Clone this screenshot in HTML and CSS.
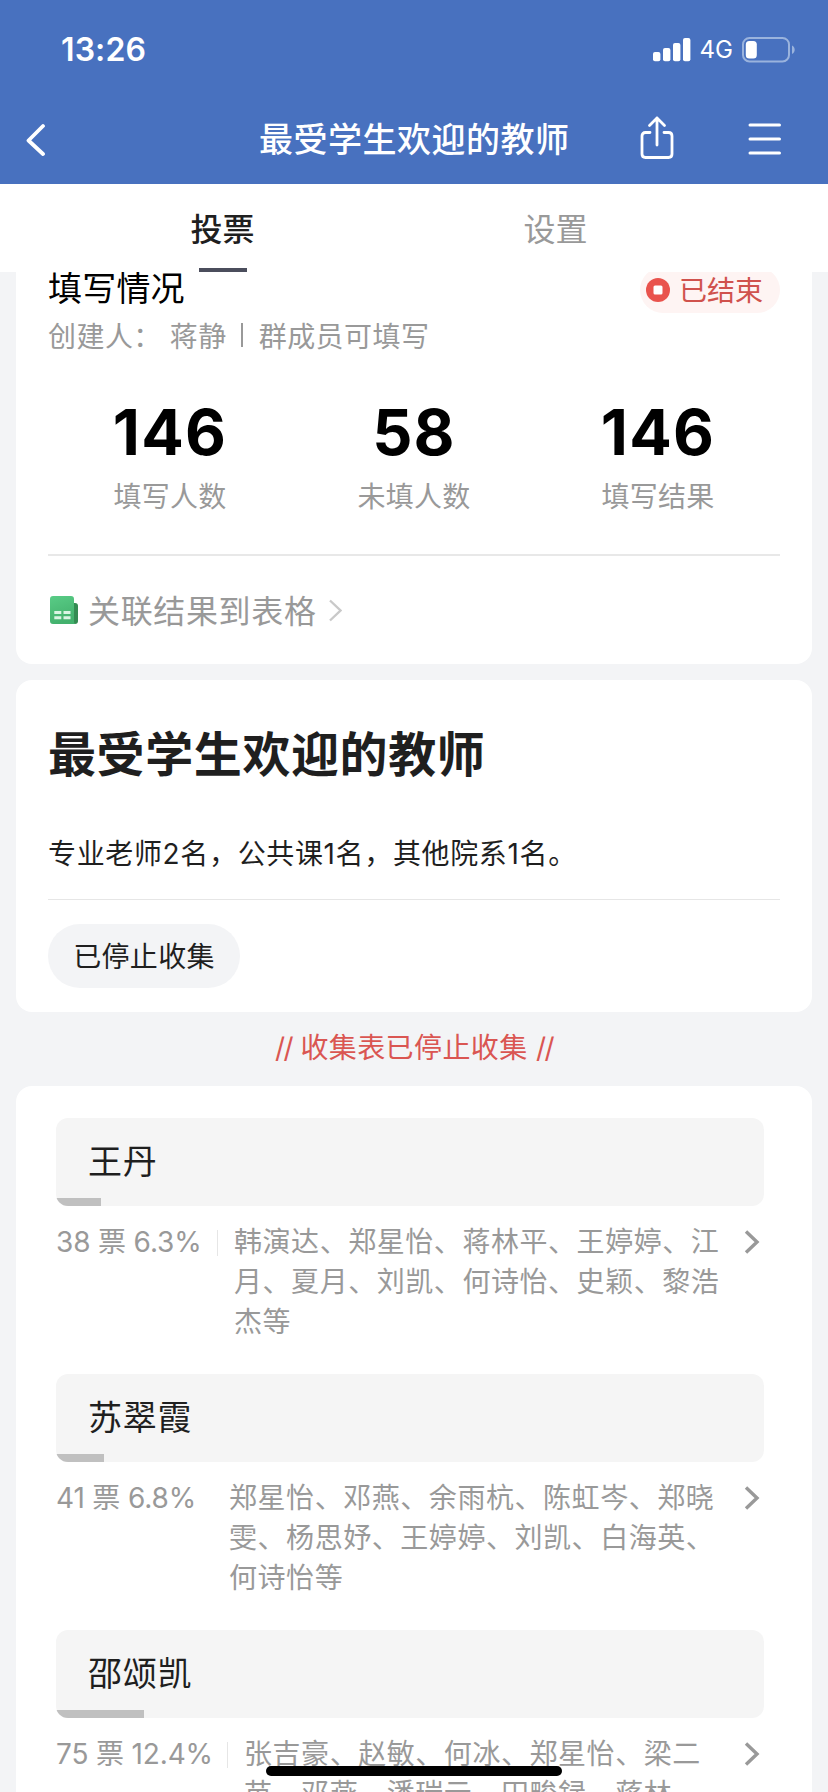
FILE: index.html
```html
<!DOCTYPE html>
<html lang="zh-CN">
<head>
<meta charset="utf-8">
<title>最受学生欢迎的教师</title>
<link rel="stylesheet" href="styles.css">
</head>
<body>
<div class="screen">
  <header class="header">
    <div class="status">
      <span class="time">13:26</span>
      <div class="status-right">
        <svg class="signal" width="38" height="24" viewBox="0 0 38 24" fill="#fff"><rect x="0" y="14" width="7.4" height="9.3" rx="2"/><rect x="10" y="10" width="7.4" height="13.3" rx="2"/><rect x="20" y="5" width="7.4" height="18.3" rx="2"/><rect x="30" y="0" width="7.4" height="23.3" rx="2"/></svg>
        <span class="net">4G</span>
        <svg width="54" height="26" viewBox="0 0 54 26"><rect x="1" y="1" width="46" height="23.4" rx="6.5" fill="none" stroke="#9ab3dd" stroke-width="2"/><rect x="3.8" y="4" width="11" height="17.4" rx="3.5" fill="#fff"/><path d="M50 8.5c3.6 1.3 3.6 7.100 0 8.400z" fill="#9ab3dd"/></svg>
      </div>
    </div>
    <div class="nav">
      <svg class="back" width="20" height="34" viewBox="0 0 20 34" fill="none" stroke="#fff" stroke-width="3.800" stroke-linecap="round" stroke-linejoin="round"><path d="M17 3L2.500 17.500L17 31"/></svg>
      <h1 class="nav-title">最受学生欢迎的教师</h1>
      <svg class="share" width="34" height="44" viewBox="0 0 34 44" fill="none" stroke="#fff" stroke-width="2.800" stroke-linecap="round" stroke-linejoin="round"><path d="M10 16.500H5.500Q2 16.500 2 20V38Q2 41.500 5.500 41.500H28.500Q32 41.500 32 38V20Q32 16.500 28.500 16.500H24M17 29V2M9.500 9.500L17 2L24.500 9.500"/></svg>
      <svg class="menu" width="34" height="34" viewBox="0 0 34 34" stroke="#fff" stroke-width="3" stroke-linecap="round"><path d="M2 3H31.500M2 17H31.500M2 31H31.500"/></svg>
    </div>
  </header>
  <nav class="tabs">
    <div class="tab active">投票</div>
    <div class="tab">设置</div>
  </nav>
  <main class="content">
    <section class="card summary">
      <div class="summary-head">
        <h2 class="summary-title">填写情况</h2>
        <span class="badge"><svg width="24" height="24" viewBox="0 0 24 24"><circle cx="12" cy="12" r="12" fill="#e9534d"/><rect x="7.500" y="7.500" width="9" height="9" rx="1.500" fill="#fff"/></svg><span class="badge-text">已结束</span></span>
      </div>
      <div class="creator"><span>创建人：</span><span class="who">蒋静</span><i class="sep"></i><span>群成员可填写</span></div>
      <div class="stats">
        <div class="stat"><b>146</b><span>填写人数</span></div>
        <div class="stat"><b>58</b><span>未填人数</span></div>
        <div class="stat"><b>146</b><span>填写结果</span></div>
      </div>
      <div class="link">
        <svg width="28" height="28" viewBox="0 0 28 28"><defs><linearGradient id="sheet" x1="0" y1="0" x2="0.300" y2="1"><stop offset="0" stop-color="#59cc86"/><stop offset="1" stop-color="#43b16d"/></linearGradient></defs><path d="M20 7h5q3 0 3 3v15q0 3-3 3h-5z" fill="#348b52"/><path d="M3 0H21q3 0 3 3V26q0 1.500 1.500 2H3q-3 0-3-3V3q0-3 3-3z" fill="url(#sheet)"/><path d="M4.300 15h7v3h-7zM13.500 15h7v3h-7zM4.300 20.300h7v3h-7zM13.500 20.300h7v3h-7z" fill="#d9f5e4"/></svg>
        <span class="link-text">关联结果到表格</span>
        <svg class="link-arrow" width="13" height="23" viewBox="0 0 13 23" fill="none" stroke="#c9c9c9" stroke-width="2.400"><path d="M1 1.500L11.500 11.500L1 21.500"/></svg>
      </div>
    </section>
    <section class="card form">
      <h2 class="form-title">最受学生欢迎的教师</h2>
      <p class="form-desc">专业老师2名，公共课1名，其他院系1名。</p>
      <div class="form-action"><button class="stopped">已停止收集</button></div>
    </section>
    <p class="notice"><span class="slash">//</span> 收集表已停止收集 <span class="slash">//</span></p>
    <section class="card votes">
      <article class="item">
        <div class="option">王丹<i class="bar" style="width:6.3%"></i></div>
        <div class="result"><span class="count w1">38 票 6.3%</span><p class="names">韩演达、郑星怡、蒋林平、王婷婷、江<br>月、夏月、刘凯、何诗怡、史颖、黎浩<br>杰等</p><svg class="more" width="16" height="24" viewBox="0 0 16 24"><path d="M2 1.500L13 12L2 22.500"/></svg></div>
      </article>
      <article class="item">
        <div class="option">苏翠霞<i class="bar" style="width:6.8%"></i></div>
        <div class="result"><span class="count w2">41 票 6.8%</span><p class="names">郑星怡、邓燕、余雨杭、陈虹岑、郑晓<br>雯、杨思妤、王婷婷、刘凯、白海英、<br>何诗怡等</p><svg class="more" width="16" height="24" viewBox="0 0 16 24"><path d="M2 1.500L13 12L2 22.500"/></svg></div>
      </article>
      <article class="item">
        <div class="option">邵颂凯<i class="bar" style="width:12.4%"></i></div>
        <div class="result"><span class="count w3">75 票 12.4%</span><p class="names">张吉豪、赵敏、何冰、郑星怡、梁二<br>苗、邓燕、潘瑞云、田畯録、蒋林</p><svg class="more" width="16" height="24" viewBox="0 0 16 24"><path d="M2 1.500L13 12L2 22.500"/></svg></div>
      </article>
    </section>
  </main>
  <div class="home"></div>
</div>
</body>
</html>
```
FILE: styles.css
```css
* { box-sizing: border-box; margin: 0; padding: 0; }
body { background: #f3f4f6; font-family: Inter, "Noto Sans CJK SC", sans-serif; color: #1f1f1f; }
svg { display: block; flex: none; }
i { font-style: normal; }
.screen { position: relative; width: 828px; height: 1792px; overflow: hidden; display: flex; flex-direction: column; white-space: nowrap; }

.header { height: 184px; flex: none; background: #4871bf; color: #fff; }
.status { height: 98px; padding: 1px 32px 0 61px; display: flex; align-items: center; justify-content: space-between; }
.time { font-size: 32px; font-weight: 600; letter-spacing: .1px; }
.status-right { display: flex; align-items: center; }
.net { margin: 0 9px 0 9px; font-size: 24px; }
.nav { height: 84px; padding: 0 46px 0 26px; display: flex; align-items: center; }
.nav-title { margin-left: 213px; font-size: 34px; line-height: 50px; font-weight: 500; letter-spacing: .5px; }
.share { margin-left: auto; margin-bottom: 4px; }
.menu { margin-left: 74px; margin-bottom: 2px; }

.tabs { height: 88px; flex: none; padding: 0 106px 0 56px; display: flex; background: #fff; position: relative; z-index: 1; }
.tab { flex: 1; display: flex; justify-content: center; align-items: center; padding-bottom: 3px; font-size: 32px; color: #999; position: relative; }
.tab.active { color: #1f1f1f; font-weight: 500; }
.tab.active::after { content: ""; position: absolute; bottom: 0; left: 50%; width: 48px; height: 4px; margin-left: -24px; background: #4b4d5c; }

.content { flex: 1; min-height: 0; padding: 0 16px; }
.card { background: #fff; border-radius: 16px; padding: 0 32px; }
.summary { display: flow-root; height: 392px; border-radius: 0 0 16px 16px; }
.summary-head { height: 46px; margin-top: -5px; display: flex; justify-content: space-between; align-items: center; }
.summary-title { padding-bottom: 2px; font-size: 34px; line-height: 42px; font-weight: 400; color: #000; letter-spacing: .2px; }
.badge { height: 46px; padding: 0 17px 0 6px; border-radius: 23px; background: #fef4f3; color: #d0524d; font-size: 28px; display: flex; align-items: center; gap: 9px; }
.badge-text { padding-bottom: 2px; }
.creator { height: 40px; margin-top: 2px; margin-bottom: 1px; display: flex; align-items: center; font-size: 28px; letter-spacing: .45px; color: #999; }
.who { margin-left: 8px; }
.sep { width: 2px; height: 24px; background: #999; margin: 0 16px 0 14px; }
.stats { height: 200px; border-bottom: 2px solid #e8e8e8; display: flex; }
.stat { flex: 1; display: flex; flex-direction: column; align-items: center; color: #999; font-size: 28px; letter-spacing: .3px; }
.stat b { margin-top: 38px; height: 76px; line-height: 76px; font-size: 63px; font-weight: 700; color: #000; letter-spacing: 1.2px; }
.stat span { margin-top: 7px; line-height: 40px; }
.link { height: 108px; padding-left: 2px; display: flex; align-items: center; color: #999; }
.link-text { margin-left: 10px; padding-bottom: 2px; font-size: 32px; letter-spacing: .65px; }
.link-arrow { margin-left: 12px; }

.form { height: 332px; margin-top: 16px; }
.form-title { padding-top: 40px; font-size: 48px; line-height: 70px; font-weight: 700; letter-spacing: .6px; }
.form-desc { height: 110px; padding-top: 44px; line-height: 40px; font-size: 28px; letter-spacing: .65px; border-bottom: 1px solid #e6e6e6; }
.form-action { padding-top: 24px; }
.stopped { width: 192px; height: 64px; padding-bottom: 2px; border: 0; border-radius: 32px; background: #f3f4f6; font: inherit; font-size: 28px; letter-spacing: .3px; color: #1f1f1f; }
.notice { height: 74px; line-height: 73px; text-align: center; font-size: 28px; letter-spacing: .4px; color: #da5652; }
.slash { letter-spacing: -1.5px; }

.votes { height: 760px; padding: 32px 48px 0 40px; }
.item { height: 256px; }
.option { height: 88px; padding-left: 32px; border-radius: 12px; background: #f5f5f5; position: relative; overflow: hidden; font-size: 34px; line-height: 88px; letter-spacing: .8px; }
.bar { position: absolute; left: 0; bottom: 0; height: 8px; background: #c0c0c0; }
.result { margin-top: 16px; display: flex; align-items: flex-start; color: #999; font-size: 28px; line-height: 40px; }
.count { position: relative; height: 40px; letter-spacing: -.15px; }
.count::after { content: ""; position: absolute; right: 16px; top: 8px; width: 1px; height: 26px; background: #e6e6e6; }
.w1 { width: 178px; }
.w2 { width: 173px; }
.w2::after { display: none; }
.w3 { width: 188px; }
.names { letter-spacing: .55px; }
.more { margin: 8px 4px 0 auto; fill: none; stroke: #999; stroke-width: 3.4; }

.home { position: absolute; left: 266px; top: 1766px; width: 296px; height: 10px; border-radius: 5px; background: #000; }
```
